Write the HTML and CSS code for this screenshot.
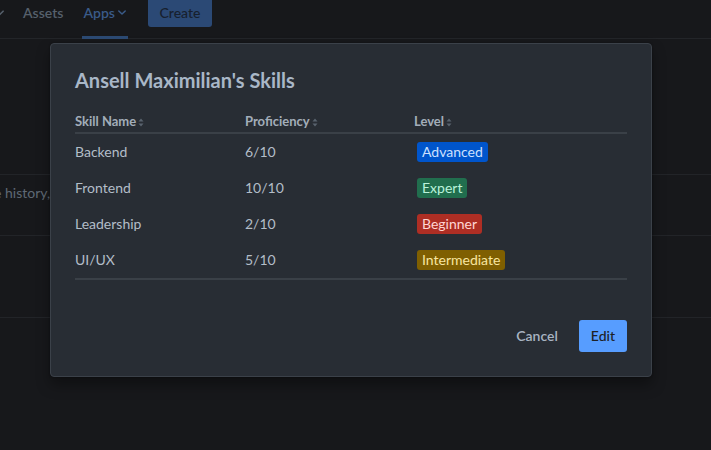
FILE: index.html
```html
<!DOCTYPE html>
<html>
<head>
<meta charset="utf-8">
<link rel="stylesheet" href="styles.css">
</head>
<body>
<header class="nav">
  <span class="nav-item chev-only"><svg class="chev" viewBox="0 0 10 6" width="9" height="6"><path d="M1 1l4 4 4-4" fill="none" stroke="currentColor" stroke-width="1.8" stroke-linecap="round" stroke-linejoin="round"/></svg></span>
  <span class="nav-item">Assets</span>
  <span class="nav-item active">Apps <svg class="chev" viewBox="0 0 10 6" width="8" height="5"><path d="M1 1l4 4 4-4" fill="none" stroke="currentColor" stroke-width="1.8" stroke-linecap="round" stroke-linejoin="round"/></svg></span>
  <span class="create">Create</span>
</header>
<main class="page">
  <div class="row row-a"></div>
  <div class="row row-b"><span class="bg-text">e history,</span></div>
  <div class="row row-c"></div>
</main>

<div class="modal" role="dialog">
  <h1 class="title">Ansell Maximilian's Skills</h1>
  <table class="skills">
    <colgroup><col class="c1"><col class="c2"><col class="c3"></colgroup>
    <thead>
      <tr>
        <th>Skill Name<svg class="sort" viewBox="0 0 6 9" width="6" height="9"><path d="M3 0.5L5.5 3.5H0.5z M3 8.5L5.5 5.5H0.5z" fill="currentColor"/></svg></th>
        <th>Proficiency<svg class="sort" viewBox="0 0 6 9" width="6" height="9"><path d="M3 0.5L5.5 3.5H0.5z M3 8.5L5.5 5.5H0.5z" fill="currentColor"/></svg></th>
        <th>Level<svg class="sort" viewBox="0 0 6 9" width="6" height="9"><path d="M3 0.5L5.5 3.5H0.5z M3 8.5L5.5 5.5H0.5z" fill="currentColor"/></svg></th>
      </tr>
    </thead>
    <tbody>
      <tr><td>Backend</td><td>6/10</td><td><span class="badge blue">Advanced</span></td></tr>
      <tr><td>Frontend</td><td>10/10</td><td><span class="badge green">Expert</span></td></tr>
      <tr><td>Leadership</td><td>2/10</td><td><span class="badge red">Beginner</span></td></tr>
      <tr><td>UI/UX</td><td>5/10</td><td><span class="badge yellow">Intermediate</span></td></tr>
    </tbody>
  </table>
  <div class="footer">
    <button class="btn subtle">Cancel</button>
    <button class="btn primary">Edit</button>
  </div>
</div>
</body>
</html>
```

FILE: styles.css
```css
* { box-sizing: border-box; }
html, body { margin: 0; padding: 0; }
body {
  width: 711px;
  height: 450px;
  overflow: hidden;
  background: #17181b;
  font-family: "Lato", "Noto Sans", sans-serif;
  position: relative;
}

.nav {
  height: 39px;
  border-bottom: 1px solid #232529;
  display: flex;
  align-items: flex-start;
}
.nav-item {
  height: 39px;
  display: flex;
  align-items: flex-start;
  padding-top: 4px;
  font-size: 14px;
  font-weight: 600;
  color: #56606c;
  line-height: 18px;
  margin-right: 19px;
}
.chev-only { margin-left: -5px; padding-top: 10px; margin-right: 19px; }
.nav-item.active {
  color: #3a5b89;
  border-bottom: 3px solid #2c4a73;
  padding: 4px 2px 0 1px;
  margin-right: 20px;
  gap: 3px;
}
.nav-item.active .chev { margin-top: 6px; }
.create {
  height: 27px;
  width: 64px;
  background: #2b4975;
  color: #17202e;
  border-radius: 0 0 3px 3px;
  font-size: 14px;
  font-weight: 500;
  display: flex;
  justify-content: center;
  padding-top: 4px;
  line-height: 18px;
}

.page .row { border-bottom: 1px solid #222428; }
.row-a { height: 136px; }
.row-b { height: 61px; padding-top: 7px; }
.row-c { height: 82px; }
.bg-text {
  display: inline-block;
  margin-left: -6px;
  font-size: 14px;
  color: #5f6975;
  line-height: 18px;
}

.modal {
  position: absolute;
  left: 50px;
  top: 43px;
  width: 602px;
  height: 334px;
  background: #282d34;
  border: 1px solid #3b4149;
  border-radius: 4px;
  padding: 24px;
  box-shadow: 0 8px 14px rgba(0,0,0,0.35), 0 0 2px rgba(0,0,0,0.4);
  display: flex;
  flex-direction: column;
}
.title {
  margin: 0;
  font-size: 20px;
  line-height: 24px;
  font-weight: 700;
  color: #a9b7c7;
}
.skills {
  margin-top: 16px;
  width: 552px;
  border-collapse: collapse;
  table-layout: fixed;
}
.c1 { width: 170px; }
.c2 { width: 169px; }
.c3 { width: 213px; }
.skills th {
  text-align: left;
  font-size: 13px;
  font-weight: 700;
  color: #a3adb9;
  line-height: 16px;
  padding: 5px 0 3px 0;
  border-bottom: 2px solid #3a4047;
}
.sort { color: #59636e; margin-left: 2px; vertical-align: -1px; }
.skills td {
  font-size: 14px;
  line-height: 20px;
  color: #b3bdc8;
  padding: 8px 0;
  height: 36px;
}
.skills tbody tr:last-child td { border-bottom: 2px solid #3a4047; }
.badge {
  display: inline-block;
  margin-left: 3px;
  height: 20px;
  line-height: 20px;
  padding: 0 5px;
  border-radius: 3px;
  font-size: 14px;
}
.blue { background: #0055cc; color: #cce0ff; }
.green { background: #216e4e; color: #baf3db; }
.red { background: #ae2e24; color: #ffd5d2; }
.yellow { background: #7f5f01; color: #f8e6a0; }

.footer {
  margin-top: auto;
  display: flex;
  justify-content: flex-end;
  gap: 9px;
}
.btn {
  height: 32px;
  border: none;
  border-radius: 3px;
  padding: 0 12px;
  font-family: inherit;
  font-size: 14px;
  font-weight: 600;
  line-height: 32px;
}
.subtle { background: transparent; color: #a8b4c2; }
.primary { background: #579dff; color: #1d2125; font-weight: 500; }
```
